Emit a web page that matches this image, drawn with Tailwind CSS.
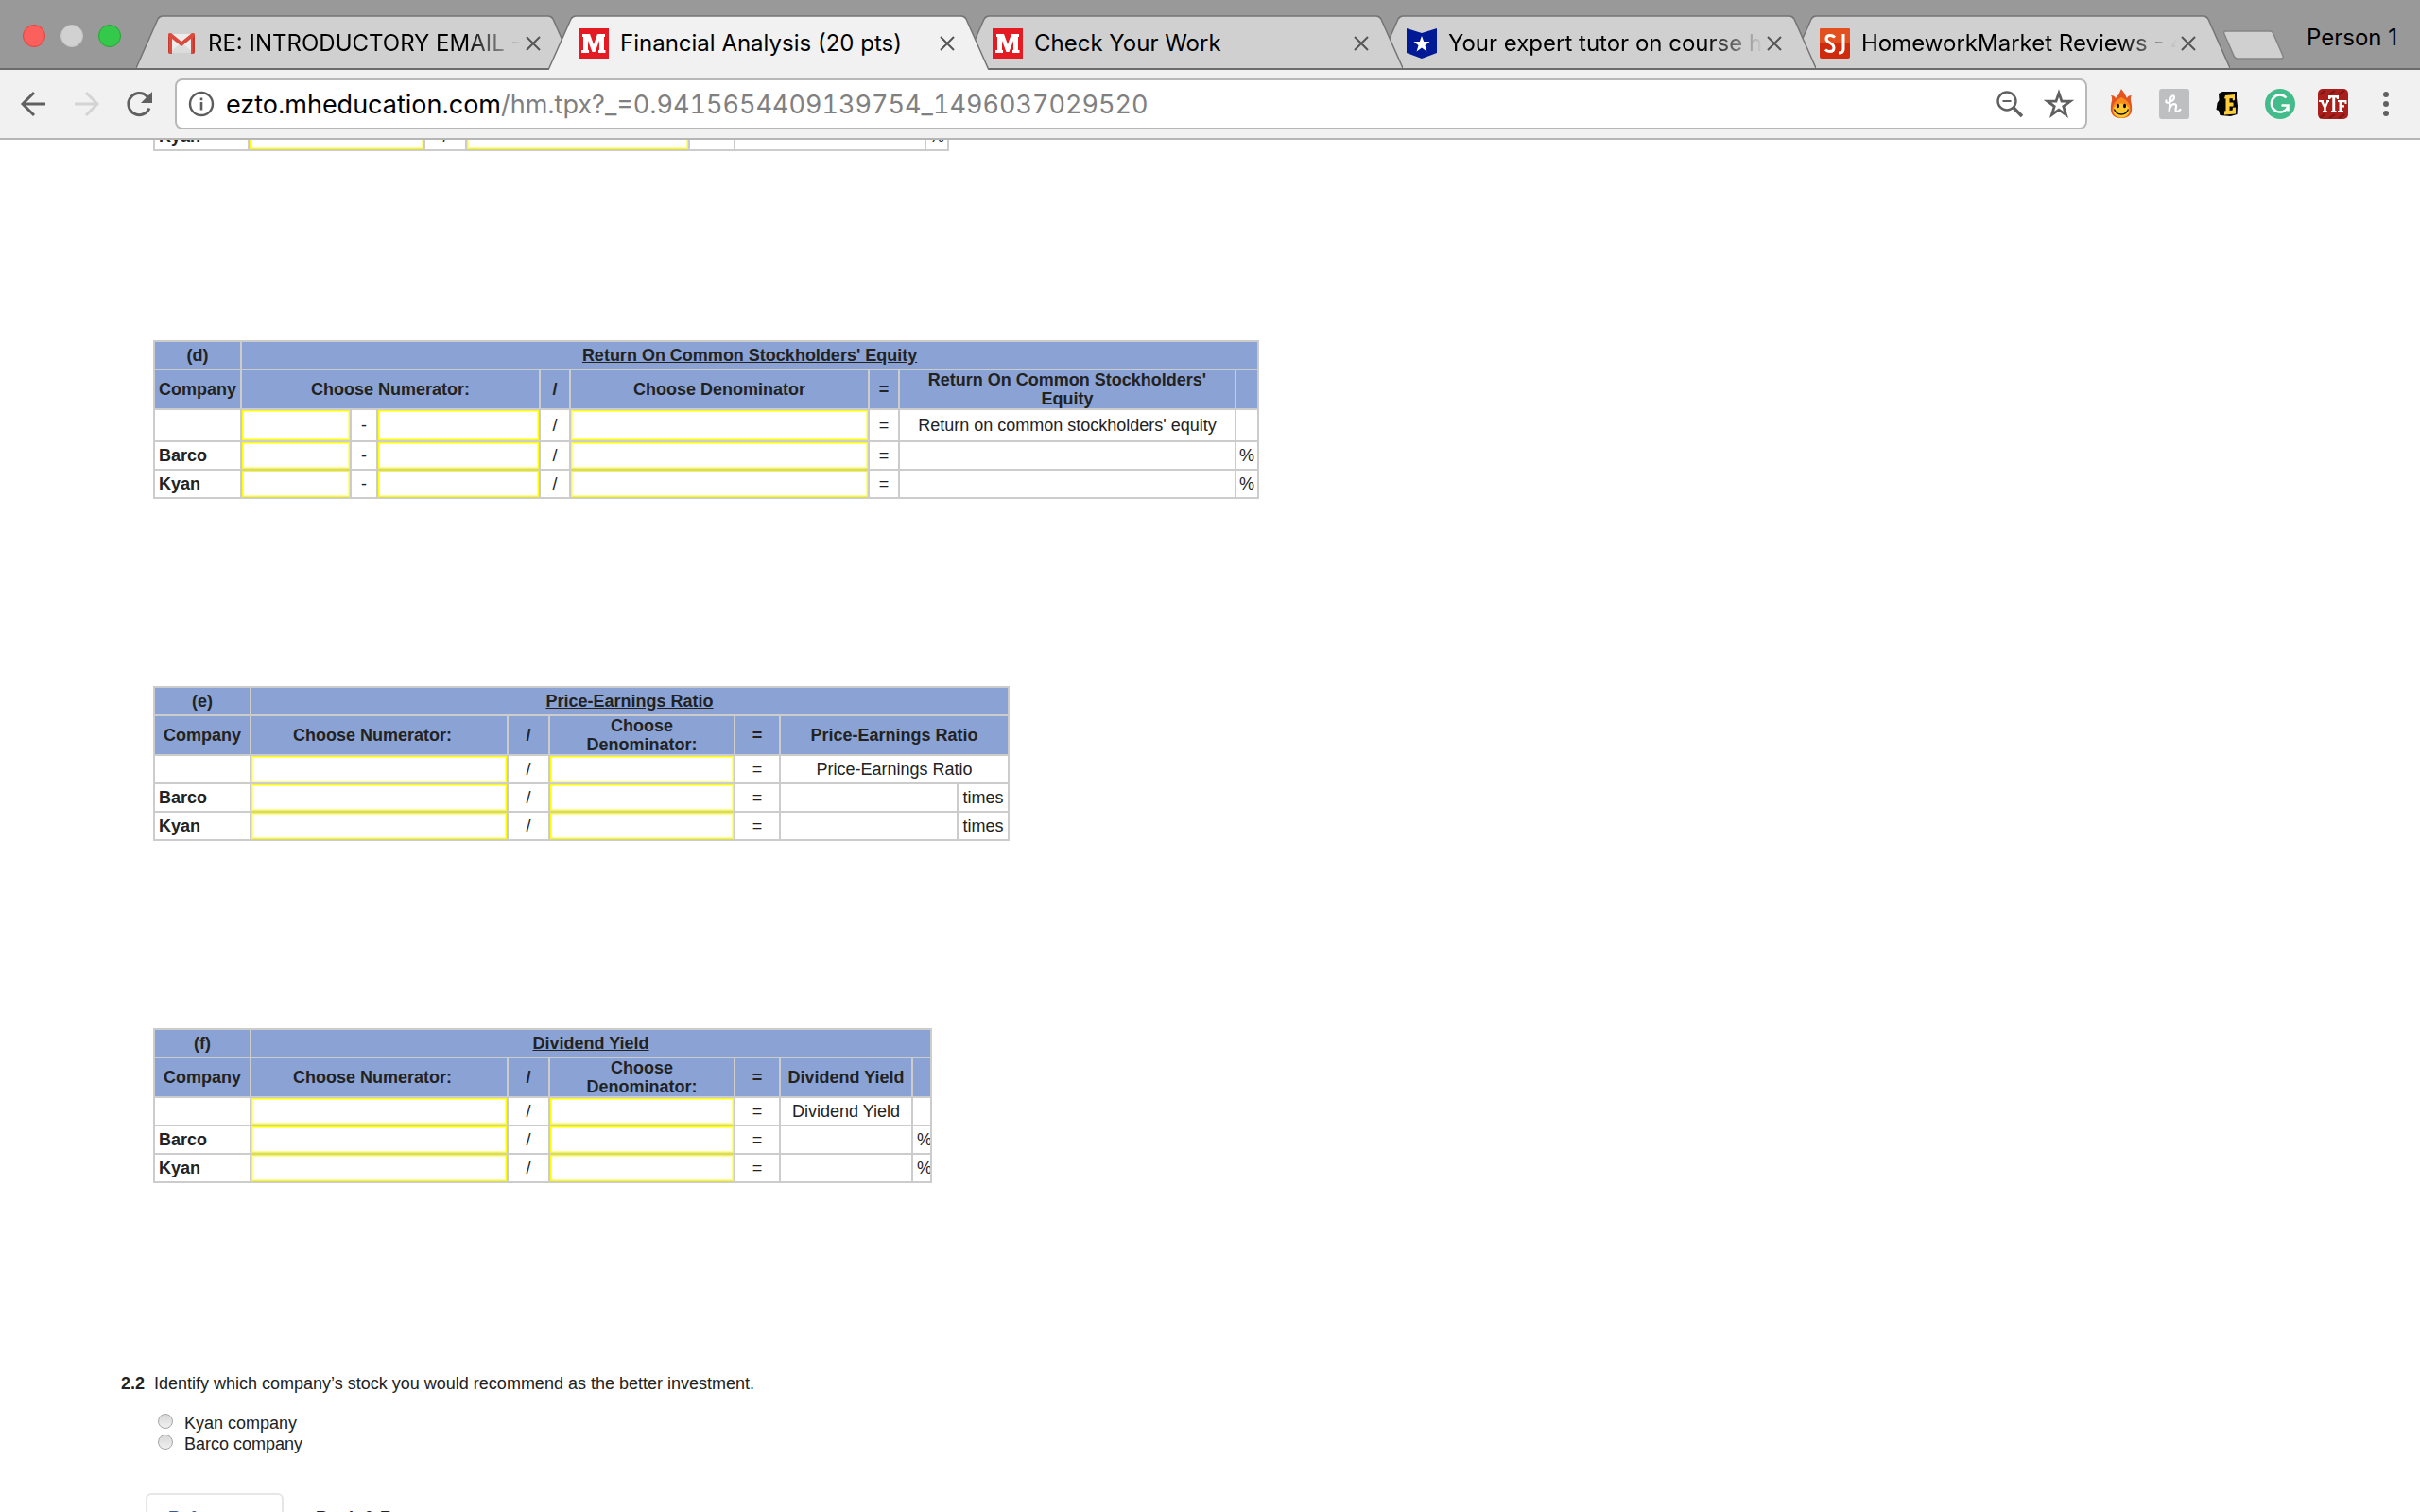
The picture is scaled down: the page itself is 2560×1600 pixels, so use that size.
<!DOCTYPE html>
<html lang="en">
<head>
<meta charset="utf-8">
<title>Financial Analysis (20 pts)</title>
<script src="https://cdn.jsdelivr.net/npm/@tailwindcss/browser@4"></script>
</head>
<body class="flex h-screen flex-col overflow-hidden bg-white font-['Liberation_Sans',Arial,sans-serif] text-lg/5 text-[#222]">

<!-- Tab strip -->
<header class="flex h-[74px] shrink-0 items-end border-b-2 border-[#6c6c6c] bg-[#999] font-[Inter,sans-serif] text-2xl text-black">
  <div class="flex w-[144px] shrink-0 gap-4 self-stretch pt-[26px] pl-6">
    <button aria-label="Close window" class="size-6 rounded-full border border-[#e0443e] bg-[#fc605c]"></button>
    <button aria-label="Minimize window" class="size-6 rounded-full border border-[#c4c4c4] bg-[#d1d1d1]"></button>
    <button aria-label="Zoom window" class="size-6 rounded-full border border-[#24a732] bg-[#34c94a]"></button>
  </div>
  <nav aria-label="Tabs" class="flex min-w-0 items-end">
    <div class="relative flex h-14 w-[464px] items-center px-8 pt-1">
      <svg class="absolute inset-0 size-full" viewBox="0 0 464 56" preserveAspectRatio="none"><path d="M0 56 L23 4 Q25 1 28 1 H436 Q439 1 441 4 L464 56" fill="#d0d0d0" stroke="#747474" stroke-width="1.5"/></svg>
      <svg class="relative size-8 shrink-0" viewBox="0 0 32 32"><path d="M3 6h26v20H3z" fill="#ececec"/><path d="M3 26l13-11 13 11z" fill="#dcdcdc"/><path d="M2 7q0-2 2-2v22H4q-2 0-2-2zM30 7q0-2-2-2v22q2 0 2-2z" fill="#c5392c"/><path d="M2 8q0-3 3-3l11 9 11-9q3 0 3 3l-2 2v17h-2V11L16 19 6 11v16H3V10z" fill="#dc4a3d"/></svg>
      <a href="#" class="relative ml-3 flex-1 overflow-hidden whitespace-nowrap [mask-image:linear-gradient(to_right,#000_82%,transparent)]">RE: INTRODUCTORY EMAIL -</a>
      <button aria-label="Close tab" class="relative flex size-6 items-center justify-center"><svg class="size-4" viewBox="0 0 16 16"><path d="M1 1l14 14M15 1L1 15" stroke="#555" stroke-width="2"/></svg></button>
    </div>
    <div class="relative z-30 -mb-0.5 -ml-7 flex h-[58px] w-[466px] items-center px-8 pt-1 pb-0.5">
      <svg class="absolute inset-0 size-full" viewBox="0 0 466 58" preserveAspectRatio="none"><path d="M0 58 L24 4 Q26 1 29 1 H437 Q440 1 442 4 L466 58" fill="#f1f1f1" stroke="#747474" stroke-width="1.5"/></svg>
      <svg class="relative size-8 shrink-0" viewBox="0 0 32 32"><path d="M0 0h32v32H0z" fill="#e51b24"/><path d="M4 6h8l4 11 4-11h8v3h-1v14h1.500v3H21v-3h1V13l-4.500 12h-3L10 13v10h1v3H3v-3h2V9H4z" fill="#fff"/></svg>
      <a href="#" aria-current="page" class="relative ml-3 flex-1 overflow-hidden whitespace-nowrap">Financial Analysis (20 pts)</a>
      <button aria-label="Close tab" class="relative flex size-6 items-center justify-center"><svg class="size-4" viewBox="0 0 16 16"><path d="M1 1l14 14M15 1L1 15" stroke="#555" stroke-width="2"/></svg></button>
    </div>
    <div class="relative z-20 -ml-7 flex h-14 w-[466px] items-center px-8 pt-1">
      <svg class="absolute inset-0 size-full" viewBox="0 0 464 56" preserveAspectRatio="none"><path d="M0 56 L23 4 Q25 1 28 1 H436 Q439 1 441 4 L464 56" fill="#d0d0d0" stroke="#747474" stroke-width="1.5"/></svg>
      <svg class="relative size-8 shrink-0" viewBox="0 0 32 32"><path d="M0 0h32v32H0z" fill="#e51b24"/><path d="M4 6h8l4 11 4-11h8v3h-1v14h1.500v3H21v-3h1V13l-4.500 12h-3L10 13v10h1v3H3v-3h2V9H4z" fill="#fff"/></svg>
      <a href="#" class="relative ml-3 flex-1 overflow-hidden whitespace-nowrap">Check Your Work</a>
      <button aria-label="Close tab" class="relative flex size-6 items-center justify-center"><svg class="size-4" viewBox="0 0 16 16"><path d="M1 1l14 14M15 1L1 15" stroke="#555" stroke-width="2"/></svg></button>
    </div>
    <div class="relative z-10 -ml-7 flex h-14 w-[465px] items-center px-8 pt-1">
      <svg class="absolute inset-0 size-full" viewBox="0 0 464 56" preserveAspectRatio="none"><path d="M0 56 L23 4 Q25 1 28 1 H436 Q439 1 441 4 L464 56" fill="#d0d0d0" stroke="#747474" stroke-width="1.5"/></svg>
      <svg class="relative size-8 shrink-0" viewBox="0 0 32 32"><path d="M0 0l16 5 16-5v26l-16 6-16-6z" fill="#001a96"/><path d="M16 8l2.200 6h6.300l-5 4 1.900 6.500-5.400-4-5.400 4 1.900-6.500-5-4h6.300z" fill="#fff"/></svg>
      <a href="#" class="relative ml-3 flex-1 overflow-hidden whitespace-nowrap [mask-image:linear-gradient(to_right,#000_82%,transparent)]">Your expert tutor on course h</a>
      <button aria-label="Close tab" class="relative flex size-6 items-center justify-center"><svg class="size-4" viewBox="0 0 16 16"><path d="M1 1l14 14M15 1L1 15" stroke="#555" stroke-width="2"/></svg></button>
    </div>
    <div class="relative -ml-7 flex h-14 w-[466px] items-center px-8 pt-1">
      <svg class="absolute inset-0 size-full" viewBox="0 0 464 56" preserveAspectRatio="none"><path d="M0 56 L23 4 Q25 1 28 1 H436 Q439 1 441 4 L464 56" fill="#d0d0d0" stroke="#747474" stroke-width="1.5"/></svg>
      <svg class="relative size-8 shrink-0" viewBox="0 0 32 32"><rect width="32" height="32" rx="2" fill="#d02a0c"/><path d="M0 2q0-2 2-2h28q2 0 2 2v14H0z" fill="#e2501f"/><path d="M16 9.500Q14 7.500 11 7.500q-4 0-4 3.500 0 2.500 4 4.500 4 2 4 5 0 4-4.500 4Q8 24.500 6 22.500M25 6v16q0 4-5 4" fill="none" stroke="#fff" stroke-width="3"/></svg>
      <a href="#" class="relative ml-3 flex-1 overflow-hidden whitespace-nowrap [mask-image:linear-gradient(to_right,#000_82%,transparent)]">HomeworkMarket Reviews - 4</a>
      <button aria-label="Close tab" class="relative flex size-6 items-center justify-center"><svg class="size-4" viewBox="0 0 16 16"><path d="M1 1l14 14M15 1L1 15" stroke="#555" stroke-width="2"/></svg></button>
    </div>
  </nav>
  <button aria-label="New tab" class="-ml-2 mb-2 shrink-0"><svg class="h-8 w-[66px]" viewBox="0 0 66 32"><path d="M3 1H50Q53 1 54 4L64 27Q65 30 62 30H16Q13 30 12 27L2 4Q1 1 3 1z" fill="#d0d0d0" stroke="#858585" stroke-width="1.500"/></svg></button>
  <button class="mr-6 ml-auto shrink-0 self-start pt-6 text-2xl/8">Person 1</button>
</header>

<!-- Toolbar -->
<div class="flex h-[74px] shrink-0 items-start border-b-2 border-[#b6b6b6] bg-[#f1f1f1] px-5 pt-[9px]">
  <div class="flex h-[54px] w-[165px] shrink-0 items-center">
    <button aria-label="Back"><svg class="size-8" viewBox="0 0 32 32"><path d="M28 16H5M16 4L4 16l12 12" fill="none" stroke="#606060" stroke-width="3"/></svg></button>
    <button aria-label="Forward" class="ml-6"><svg class="size-8" viewBox="0 0 32 32"><path d="M3 16h23M15 4l12 12-12 12" fill="none" stroke="#d4d4d4" stroke-width="3"/></svg></button>
    <button aria-label="Reload" class="ml-6"><svg class="size-8" viewBox="0 0 32 32"><path d="M26 20.500A11.500 11.500 0 1 1 24 8.500" fill="none" stroke="#606060" stroke-width="3"/><path d="M29 3v12H17z" fill="#606060"/></svg></button>
  </div>
  <div class="flex h-[54px] min-w-0 flex-1 items-center rounded-lg border-2 border-[#b8b8b8] bg-white px-3 font-[Inter,sans-serif] text-[27px]">
    <svg class="size-7 shrink-0" viewBox="0 0 28 28"><circle cx="14" cy="14" r="12" fill="none" stroke="#5c5c5c" stroke-width="2.400"/><path d="M14 12v8.500M14 7.500v2.700" stroke="#5c5c5c" stroke-width="2.600"/></svg>
    <div class="ml-3 flex-1 pt-0.5 whitespace-nowrap text-[#808080] tabular-nums"><span class="text-black">ezto.mheducation.com</span>/hm.tpx?_=0.9415654409139754_1496037029520</div>
    <button aria-label="Zoom"><svg class="size-8" viewBox="0 0 32 32"><circle cx="13" cy="13" r="9.500" fill="none" stroke="#606060" stroke-width="2.400"/><path d="M8.500 13h9" stroke="#606060" stroke-width="2"/><path d="M19.500 19.500l9.500 9.500" stroke="#606060" stroke-width="3.600"/></svg></button>
    <button aria-label="Bookmark this page" class="ml-5"><svg class="size-8" viewBox="0 0 32 32"><path d="M16 4.500l3 8.700h9l-7.200 5.400 2.700 8.900L16 22.200l-7.500 5.300 2.700-8.900L4 13.200h9z" fill="none" stroke="#606060" stroke-width="2.800"/></svg></button>
  </div>
  <div class="flex h-[54px] shrink-0 items-center gap-6 pl-5">
    <button aria-label="Hola"><svg class="size-8" viewBox="0 0 32 32"><path d="M16 0q4 5 6 10 1-3 5-3-2 3-.5 7.500Q30 31 16 31 2 31 5.500 14.500 7 10 5 7q4 0 5 3 4-4 6-10z" fill="#e35420"/><path d="M16 9q10 4 9.500 13Q25 30.500 16 30.500T6.500 22Q7 13 16 9z" fill="#f98a1c"/><ellipse cx="16" cy="23" rx="8.500" ry="7.500" fill="#fdc92a"/><ellipse cx="12.500" cy="18" rx="1.500" ry="2.300"/><ellipse cx="19.500" cy="18" rx="1.500" ry="2.300"/><path d="M8.500 21.500q2 5.500 7.500 5.500t7.500-5.500" fill="none" stroke="#111" stroke-width="1.400"/></svg></button>
    <button aria-label="Honey"><svg class="size-8" viewBox="0 0 32 32"><rect width="32" height="32" rx="3" fill="#bebfc1"/><path d="M7.500 12.500q-1 3 2.500 2 6-2 6-5.500 0-2-1.800-1.500Q12 8 11.500 14l-1 10q1-7 5-8 3 0 2.500 3l-.5 3q0 3 3 1.500l2-1.500" fill="none" stroke="#fff" stroke-width="2.200" stroke-linecap="round" stroke-linejoin="round"/></svg></button>
    <button aria-label="Ebates"><svg class="size-8" viewBox="0 0 32 32"><path d="M7 5l4-2 15 0v7l1 8-.5 9-7 2-11-1-1.500-5-2.500-1 1-7 2-3z" fill="#060606"/><path d="M14 7l10-1v6l-2 .5-.5-2.500-3 .3v4.200h4v4h-4v4.500l3-.3.500-3 3-.2v7l-12 1v-4l1.500-.3V10.500L13 10.300z" fill="#fdce3a"/></svg></button>
    <button aria-label="Grammarly"><svg class="size-8" viewBox="0 0 32 32"><circle cx="16" cy="16" r="16" fill="#43bb8b"/><path d="M22.500 9.500A9 9 0 1 0 24.500 18M17.500 17.500h7v6" fill="none" stroke="#fff" stroke-width="2.500"/></svg></button>
    <button aria-label="YTF"><svg class="size-8" viewBox="0 0 32 32"><rect width="32" height="32" rx="5" fill="#a81f1b"/><path d="M2 6l6-4M12 6l6-4M22 6l6-4M2 31l5-4M12 31l6-4M22 31l6-4" stroke="#7d1412" stroke-width="2"/><path d="M11 7h11v4h-2l-.5-1.500h-1.300V23h1.300v2h-5.500v-2h1.300V9.500H14L13 11h-2zM1 12h5v1.700L7.500 18 9 13.700V12h3v2h-.8l-2.500 6v3h1v2H5v-2h1.200v-3l-3-6H1zM21 12h9.500v4H28.500v-1.800H25.500v3h2.500v2.300h-2.500V23h1.500v2h-6v-2h1.500v-9H21z" fill="#fff"/></svg></button>
    <button aria-label="Menu"><svg class="size-8" viewBox="0 0 32 32"><g fill="#606060"><circle cx="16" cy="6" r="3"/><circle cx="16" cy="16" r="3"/><circle cx="16" cy="26" r="3"/></g></svg></button>
  </div>
</div>

<main class="min-h-0 flex-1 overflow-hidden pl-[162px] [&_input[type=text]]:block [&_input[type=text]]:h-7 [&_input[type=text]]:w-full [&_input[type=text]]:border [&_input[type=text]]:border-[#ff0] [&_input[type=text]]:inset-ring [&_input[type=text]]:inset-ring-[#ffff8c] [&_input[type=text]]:outline-none [&_select]:block [&_select]:w-full [&_select]:appearance-none [&_select]:border [&_select]:border-[#ff0] [&_select]:inset-ring [&_select]:inset-ring-[#ffff8c] [&_select]:outline-none">

  <table class="-mt-5 w-[842px] table-fixed border-collapse border-2 border-[#ccc] text-center [&_td]:border-2 [&_td]:border-[#ccc]">
    <colgroup><col class="w-[100px]"><col class="w-[186px]"><col class="w-[44px]"><col class="w-[236px]"><col class="w-[48px]"><col class="w-[202px]"><col class="w-[24px]"></colgroup>
    <tbody>
      <tr class="h-[30px]"><th scope="row" class="pl-1 text-left">Kyan</th><td><input type="text" aria-label="Kyan numerator"></td><td>/</td><td><input type="text" aria-label="Kyan denominator"></td><td></td><td></td><td>%</td></tr>
    </tbody>
  </table>

  <table class="mt-[200px] w-[1170px] table-fixed border-collapse text-center [&_td]:border-2 [&_td]:border-[#ccc] [&_td]:p-0 [&_th]:border-2 [&_th]:border-[#ccc] [&_thead]:bg-[#8aa3d4]">
    <colgroup><col class="w-[92px]"><col class="w-[116px]"><col class="w-[28px]"><col class="w-[172px]"><col class="w-[32px]"><col class="w-[316px]"><col class="w-[32px]"><col class="w-[356px]"><col class="w-[24px]"></colgroup>
    <thead>
      <tr class="h-[30px]"><th>(d)</th><th colspan="8" class="underline">Return On Common Stockholders' Equity</th></tr>
      <tr class="h-[42px]"><th>Company</th><th colspan="3">Choose Numerator:</th><th>/</th><th>Choose Denominator</th><th>=</th><th class="px-5">Return On Common Stockholders' Equity</th><th></th></tr>
    </thead>
    <tbody>
      <tr class="h-[34px]"><td></td><td><select aria-label="First numerator term" class="h-8"></select></td><td>-</td><td><select aria-label="Second numerator term" class="h-8"></select></td><td>/</td><td><select aria-label="Denominator" class="h-8"></select></td><td>=</td><td>Return on common stockholders' equity</td><td></td></tr>
      <tr class="h-[30px]"><th scope="row" class="pl-1 text-left">Barco</th><td><input type="text" aria-label="Barco first term"></td><td>-</td><td><input type="text" aria-label="Barco second term"></td><td>/</td><td><input type="text" aria-label="Barco denominator"></td><td>=</td><td></td><td>%</td></tr>
      <tr class="h-[30px]"><th scope="row" class="pl-1 text-left">Kyan</th><td><input type="text" aria-label="Kyan first term"></td><td>-</td><td><input type="text" aria-label="Kyan second term"></td><td>/</td><td><input type="text" aria-label="Kyan denominator"></td><td>=</td><td></td><td>%</td></tr>
    </tbody>
  </table>

  <table class="mt-[198px] w-[906px] table-fixed border-collapse text-center [&_td]:border-2 [&_td]:border-[#ccc] [&_td]:p-0 [&_th]:border-2 [&_th]:border-[#ccc] [&_thead]:bg-[#8aa3d4]">
    <colgroup><col class="w-[102px]"><col class="w-[272px]"><col class="w-[44px]"><col class="w-[196px]"><col class="w-[48px]"><col class="w-[188px]"><col class="w-[54px]"></colgroup>
    <thead>
      <tr class="h-[30px]"><th>(e)</th><th colspan="6" class="underline">Price-Earnings Ratio</th></tr>
      <tr class="h-[42px]"><th>Company</th><th class="pr-3.5">Choose Numerator:</th><th>/</th><th class="px-5">Choose Denominator:</th><th>=</th><th colspan="2">Price-Earnings Ratio</th></tr>
    </thead>
    <tbody>
      <tr class="h-[30px]"><td></td><td><select aria-label="Numerator" class="h-7"></select></td><td>/</td><td><select aria-label="Denominator" class="h-7"></select></td><td>=</td><td colspan="2">Price-Earnings Ratio</td></tr>
      <tr class="h-[30px]"><th scope="row" class="pl-1 text-left">Barco</th><td><input type="text" aria-label="Barco numerator"></td><td>/</td><td><input type="text" aria-label="Barco denominator"></td><td>=</td><td></td><td>times</td></tr>
      <tr class="h-[30px]"><th scope="row" class="pl-1 text-left">Kyan</th><td><input type="text" aria-label="Kyan numerator"></td><td>/</td><td><input type="text" aria-label="Kyan denominator"></td><td>=</td><td></td><td>times</td></tr>
    </tbody>
  </table>

  <table class="mt-[198px] w-[824px] table-fixed border-collapse text-center [&_td]:border-2 [&_td]:border-[#ccc] [&_td]:p-0 [&_th]:border-2 [&_th]:border-[#ccc] [&_thead]:bg-[#8aa3d4]">
    <colgroup><col class="w-[102px]"><col class="w-[272px]"><col class="w-[44px]"><col class="w-[196px]"><col class="w-[48px]"><col class="w-[140px]"><col class="w-[20px]"></colgroup>
    <thead>
      <tr class="h-[30px]"><th>(f)</th><th colspan="6" class="underline">Dividend Yield</th></tr>
      <tr class="h-[42px]"><th>Company</th><th class="pr-3.5">Choose Numerator:</th><th>/</th><th class="px-5">Choose Denominator:</th><th>=</th><th>Dividend Yield</th><th></th></tr>
    </thead>
    <tbody>
      <tr class="h-[30px]"><td></td><td><select aria-label="Numerator" class="h-7"></select></td><td>/</td><td><select aria-label="Denominator" class="h-7"></select></td><td>=</td><td>Dividend Yield</td><td></td></tr>
      <tr class="h-[30px]"><th scope="row" class="pl-1 text-left">Barco</th><td><input type="text" aria-label="Barco numerator"></td><td>/</td><td><input type="text" aria-label="Barco denominator"></td><td>=</td><td></td><td><div class="overflow-hidden pl-1 text-left">%</div></td></tr>
      <tr class="h-[30px]"><th scope="row" class="pl-1 text-left">Kyan</th><td><input type="text" aria-label="Kyan numerator"></td><td>/</td><td><input type="text" aria-label="Kyan denominator"></td><td>=</td><td></td><td><div class="overflow-hidden pl-1 text-left">%</div></td></tr>
    </tbody>
  </table>

  <section class="mt-[202px] -ml-[34px]">
    <p class="flex gap-2.5"><b>2.2</b><span>Identify which company’s stock you would recommend as the better investment.</span></p>
    <fieldset class="mt-[21px] flex flex-col items-start pl-[39px]">
      <label class="flex h-[22px] items-center gap-3"><input type="radio" name="company" class="mb-1 size-4 appearance-none rounded-full border border-[#a6a6a6] bg-linear-to-b from-[#d8d8d8] to-[#f0f0f0]">Kyan company</label>
      <label class="flex h-[22px] items-center gap-3"><input type="radio" name="company" class="mb-1 size-4 appearance-none rounded-full border border-[#a6a6a6] bg-linear-to-b from-[#d8d8d8] to-[#f0f0f0]">Barco company</label>
    </fieldset>
    <div class="mt-[41px] flex items-start gap-[34px] pl-[26px] font-bold">
      <a href="#" class="w-[146px] rounded-md border-2 border-[#e6e6e6] px-[22px] py-3.5 text-[#3b5998]">References</a>
      <span class="pt-4">Book &amp; Resources</span>
    </div>
  </section>
</main>
</body>
</html>
